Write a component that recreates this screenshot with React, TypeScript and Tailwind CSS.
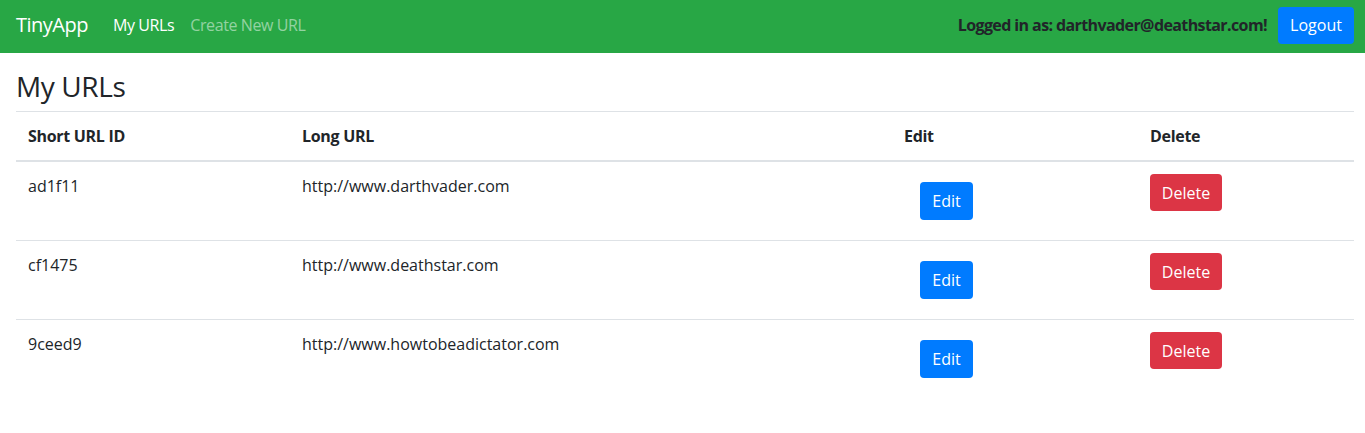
import React from 'react';

type Url = { id: string; long: string };

const urls: Url[] = [
  { id: 'ad1f11', long: 'http://www.darthvader.com' },
  { id: 'cf1475', long: 'http://www.deathstar.com' },
  { id: '9ceed9', long: 'http://www.howtobeadictator.com' },
];

const font = { fontFamily: '"Open Sans", "Noto Sans", sans-serif' };

const NavBar: React.FC = () => (
  <nav className="flex items-center h-[53px] bg-[#28a745] pl-4 pr-[11px] pt-[6px] pb-[9px]">
    <a href="#" className="text-[20px] text-white mr-[25px] leading-[30px] tracking-[-0.5px]">TinyApp</a>
    <a href="#" className="text-white mr-4 tracking-[-0.4px]">My URLs</a>
    <a href="#" className="text-white/50 tracking-[-0.4px]">Create New URL</a>
    <div className="ml-auto flex items-center">
      <span className="font-bold text-[#212529] mr-[11px] tracking-[-0.6px]">Logged in as: darthvader@deathstar.com!</span>
      <button className="bg-[#007bff] text-white rounded px-3 h-[37px] w-[76px]">Logout</button>
    </div>
  </nav>
);

const UrlRow: React.FC<{url: Url}> = ({url}) => (
  <tr className="border-t border-[#dee2e6] align-top">
    <td className="p-3">{url.id}</td>
    <td className="p-3">{url.long}</td>
    <td className="p-3">
      <form className="px-4 py-2">
        <button type="button" className="bg-[#007bff] text-white rounded h-[38px] w-[53px]">Edit</button>
      </form>
    </td>
    <td className="p-3">
      <button type="button" className="bg-[#dc3545] text-white rounded h-[37px] w-[72px]">Delete</button>
    </td>
  </tr>
);

export default function App() {
  return (
    <div className="min-h-screen bg-white text-[#212529] text-base leading-6" style={font}>
      <NavBar/>
      <main className="px-4 pt-4">
        <h3 className="text-[28px] leading-[34px] mb-2 font-medium tracking-[-0.4px]">My URLs</h3>
        <table className="w-full table-fixed border-collapse">
          <colgroup>
            <col className="w-[274px]"/>
            <col className="w-[602px]"/>
            <col className="w-[246px]"/>
            <col className="w-[216px]"/>
          </colgroup>
          <thead>
            <tr className="border-t border-[#dee2e6] border-b-2 border-b-[#dee2e6]">
              <th className="p-3 text-left font-bold tracking-[-0.3px]">Short URL ID</th>
              <th className="p-3 text-left font-bold tracking-[-0.3px]">Long URL</th>
              <th className="p-3 text-left font-bold tracking-[-0.3px]">Edit</th>
              <th className="p-3 text-left font-bold tracking-[-0.3px]">Delete</th>
            </tr>
          </thead>
          <tbody>
            {urls.map(u => <UrlRow key={u.id} url={u}/>)}
          </tbody>
        </table>
      </main>
    </div>
  );
}
